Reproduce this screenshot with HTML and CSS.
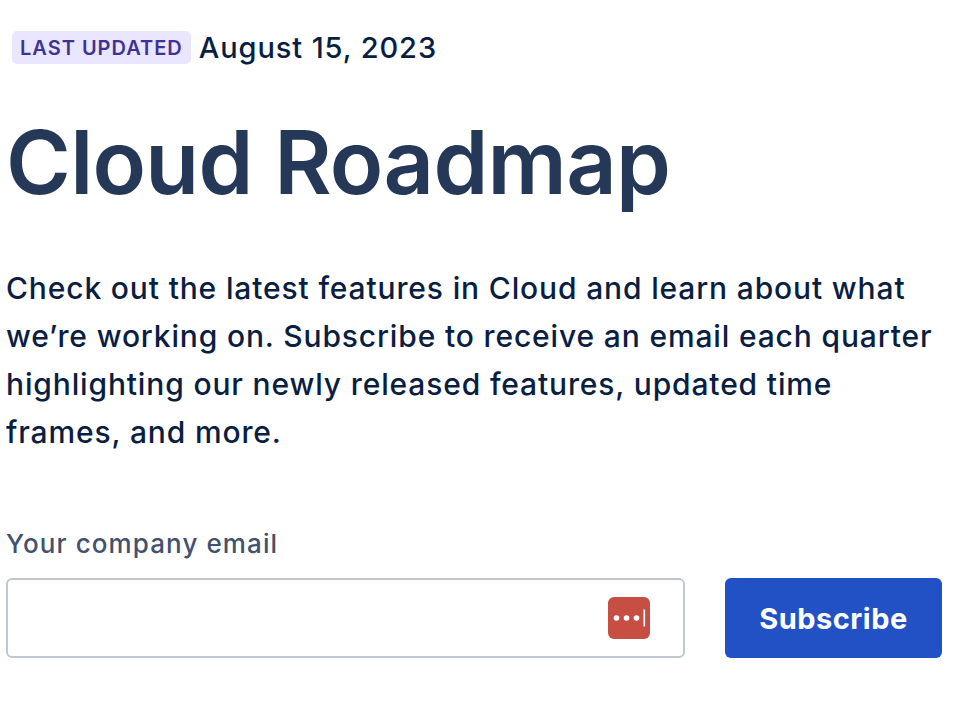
FILE: index.html
```html
<!DOCTYPE html>
<html lang="en">
<head>
    <meta charset="UTF-8">
    <meta name="viewport" content="width=device-width, initial-scale=1.0">
    <title>Cloud Roadmap</title>
    <link rel="stylesheet" href="styles.css">
</head>
<body>
    <div class="updated-row">
        <span class="lozenge">LAST UPDATED</span>
        <span class="updated-date">August 15, 2023</span>
    </div>
    <h1 class="page-title">Cloud Roadmap</h1>
    <p class="intro">Check out the latest features in Cloud and learn about what we’re working on. Subscribe to receive an email each quarter highlighting our newly released features, updated time frames, and more.</p>
    <form class="subscribe-form">
        <label class="email-label" for="email">Your company email</label>
        <div class="form-row">
            <div class="input-wrap">
                <input class="email-input" id="email" type="email">
                <!-- Password manager badge -->
                <svg class="pm-icon" width="42" height="42" viewBox="0 0 42 42" aria-hidden="true">
                    <rect width="42" height="42" rx="6" fill="#c74e43"/>
                    <circle cx="8.5" cy="21" r="2.8" fill="#fff"/>
                    <circle cx="18.5" cy="21" r="2.8" fill="#fff"/>
                    <circle cx="28.5" cy="21" r="2.8" fill="#fff"/>
                    <rect x="35.5" y="12.5" width="1.6" height="17" fill="#fff"/>
                </svg>
            </div>
            <button class="subscribe-button" type="button">Subscribe</button>
        </div>
    </form>
</body>
</html>
```

FILE: styles.css
```css
* {margin: 0; padding: 0; box-sizing: border-box;}
body {font-family: Inter, sans-serif; background-color: #fff; color: #172b4d; padding: 31px 20px 0 6px; overflow: hidden;}
.updated-row {display: flex; align-items: center; gap: 8px; padding-left: 6px; height: 33px;}
.lozenge {background: #eae6ff; color: #403294; font-size: 20px; font-weight: 600; letter-spacing: 1px; line-height: 35px; height: 33px; padding: 0 8px; border-radius: 5px;}
.updated-date {font-size: 29px; font-weight: 500; letter-spacing: 0.9px; color: #091e42;}
.page-title {font-size: 88px; font-weight: 640; letter-spacing: -0.7px; line-height: 96px; color: #253858; margin-top: 50px;}
.intro {font-size: 30px; font-weight: 450; letter-spacing: 0.85px; line-height: 48px; color: #091e42; margin-top: 54px; max-width: 946px;}
.subscribe-form {margin-top: 70px;}
.email-label {display: block; font-size: 26px; font-weight: 450; letter-spacing: 1.1px; line-height: 36px; color: #42526e;}
.form-row {display: flex; gap: 40px; margin-top: 16px;}
.input-wrap {position: relative; width: 679px; height: 80px;}
.email-input {width: 100%; height: 100%; border: 2px solid #c1c7d0; border-radius: 6px; background: #fff;}
.pm-icon {position: absolute; top: 19px; right: 35px;}
.subscribe-button {width: 217px; height: 80px; background: #2251c5; color: #fff; border: none; border-radius: 6px; font-family: Inter, sans-serif; font-size: 29px; font-weight: 700; letter-spacing: 0.5px;}
```
